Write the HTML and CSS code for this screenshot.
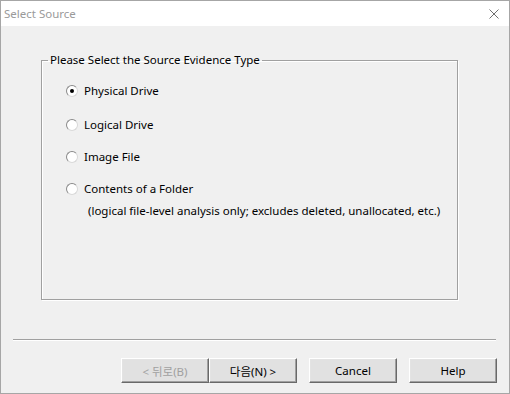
FILE: index.html
```html
<!DOCTYPE html>
<html lang="ko">
<head>
    <meta charset="UTF-8">
    <title>Select Source</title>
    <link rel="stylesheet" href="styles.css">
</head>
<body>
    <div class="window">
        <div class="titlebar">
            <span class="title">Select Source</span>
            <svg class="close" width="10" height="10" viewBox="0 0 10 10">
                <path d="M0.5 0.5 L9.5 9.5 M9.5 0.5 L0.5 9.5" stroke="#6f6f6f" stroke-width="1" fill="none"/>
            </svg>
        </div>

        <div class="body">
            <fieldset class="group">
                <legend>Please Select the Source Evidence Type</legend>
                <div class="options">
                    <label class="option first">
                        <span class="radio checked"></span>Physical Drive
                    </label>
                    <label class="option">
                        <span class="radio"></span>Logical Drive
                    </label>
                    <label class="option">
                        <span class="radio"></span>Image File
                    </label>
                    <div>
                        <label class="option">
                            <span class="radio"></span>Contents of a Folder
                        </label>
                        <div class="note">(logical file-level analysis only; excludes deleted, unallocated, etc.)</div>
                    </div>
                </div>
            </fieldset>

            <div class="separator"></div>

            <div class="buttons">
                <button class="btn" disabled>&lt; 뒤로(B)</button>
                <button class="btn">다음(N) &gt;</button>
                <button class="btn spaced">Cancel</button>
                <button class="btn spaced">Help</button>
            </div>
        </div>
    </div>
</body>
</html>
```

FILE: styles.css
```css
* {
    margin: 0;
    padding: 0;
    box-sizing: border-box;
}

body {
    font-family: 'Noto Sans', 'Noto Sans CJK KR', sans-serif;
    font-size: 11.5px;
    color: #000;
    background: #f0f0f0;
}

.window {
    width: 510px;
    height: 394px;
    border: 1px solid #a6a6a6;
    background: #f0f0f0;
}

.titlebar {
    height: 25px;
    background: #fff;
    display: flex;
    align-items: center;
    justify-content: space-between;
    padding: 0 10px 0 3px;
}

.title {
    color: #9a9a9a;
    line-height: 16px;
}

.close {
    display: block;
}

.group {
    width: 417px;
    height: 248px;
    margin: 26px 0 0 40px;
    border: 1px solid #a0a0a0;
    box-shadow: 1px 1px 0 #fff, inset 1px 1px 0 #fff;
    padding: 15px 0 0 0;
}

.group legend {
    margin-left: 6px;
    padding: 0 2px;
    line-height: 16px;
}

.options {
    display: flex;
    flex-direction: column;
    gap: 16px;
    padding-left: 24px;
}

.option {
    display: flex;
    align-items: center;
    height: 16px;
    line-height: 16px;
}

.option.first {
    margin-bottom: 2px;
}

.radio {
    width: 12px;
    height: 12px;
    border-radius: 50%;
    border: 1px solid;
    border-color: #8a8a8a #d8d8d8 #d8d8d8 #8a8a8a;
    background: #fff;
    margin-right: 6px;
    display: flex;
    align-items: center;
    justify-content: center;
}

.radio.checked::after {
    content: '';
    width: 4px;
    height: 4px;
    border-radius: 50%;
    background: #000;
}

.note {
    margin: 6px 0 0 22px;
    line-height: 16px;
}

.separator {
    margin: 39px 13px 0 12px;
    border-top: 1px solid #a0a0a0;
    border-bottom: 1px solid #fff;
}

.buttons {
    display: flex;
    justify-content: flex-end;
    padding: 17px 12px 0 0;
}

.btn {
    width: 88px;
    height: 25px;
    font-family: inherit;
    font-size: 11.5px;
    color: #000;
    background: #e1e1e1;
    border: 1px solid;
    border-color: #fff #696969 #696969 #fff;
    box-shadow: inset -1px -1px 0 #a0a0a0, inset 1px 1px 0 #e3e3e3;
}

.btn:disabled {
    color: #a0a0a0;
}

.btn.spaced {
    margin-left: 12px;
}
```
